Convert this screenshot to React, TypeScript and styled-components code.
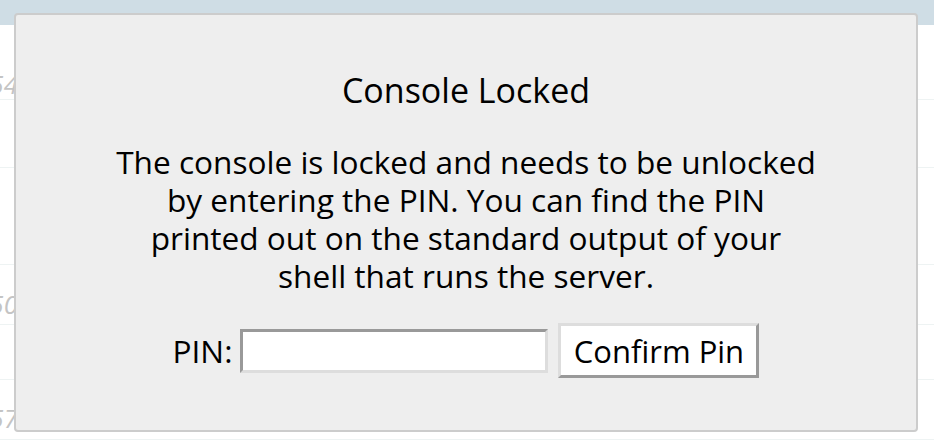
import React from "react";
import styled, { createGlobalStyle } from "styled-components";

const Global = createGlobalStyle`
  html, body { margin: 0; padding: 0; background: #ffffff; }
  body { font-family: "Open Sans", "Noto Sans", sans-serif; color: #000; }
  #root { position: relative; width: 934px; height: 448px; overflow: hidden; }
`;

const Page = styled.div`
  display: flex;
  flex-direction: column;
  width: 934px;
  height: 448px;
  background: #ffffff;
`;

const HeaderBand = styled.div`
  height: 25px;
  flex: none;
  background: #cfdde5;
`;

const Row = styled.div<{ $h: number; $pad: number }>`
  flex: none;
  height: ${(p) => p.$h}px;
  box-sizing: border-box;
  padding-top: ${(p) => p.$pad}px;
  border-bottom: 1px solid #eef3f3;
  display: flex;
`;

const LineNo = styled.span`
  margin-left: -22px;
  width: 40px;
  text-align: right;
  font-style: italic;
  font-size: 26px;
  line-height: 22px;
  color: #c4c4c4;
`;

const Overlay = styled.div`
  position: absolute;
  inset: 0;
  display: flex;
  justify-content: flex-start;
  align-items: flex-start;
  padding: 13px 0 0 14px;
`;

const Dialog = styled.div`
  box-sizing: border-box;
  width: 904px;
  height: 419px;
  background: #eeeeee;
  border: 2px solid #cccccc;
  border-radius: 4px;
  padding: 20px 60px;
  display: flex;
  flex-direction: column;
  align-items: center;
  text-align: center;
`;

const Title = styled.h3`
  margin: 36px 0 0 0;
  font-weight: normal;
  font-size: 34px;
  line-height: 38px;
`;

const Message = styled.p`
  margin: 34px 0 0 0;
  font-size: 31.6px;
  line-height: 38px;
  white-space: nowrap;
`;

const PinRow = styled.form`
  margin: 28px 0 0 0;
  display: flex;
  align-items: center;
  font-size: 31.6px;
`;

const PinLabel = styled.label`
  margin-right: 8px;
`;

const PinInput = styled.input`
  box-sizing: border-box;
  width: 308px;
  height: 44px;
  background: #ffffff;
  border-style: solid;
  border-width: 3px;
  border-color: #999999 #dddddd #dddddd #999999;
  outline: none;
  margin: 0 10px 0 0;
  padding: 0 6px;
  font-family: inherit;
  font-size: 28px;
`;

const ConfirmButton = styled.button`
  box-sizing: border-box;
  width: 201px;
  height: 55px;
  background: #ffffff;
  border-style: solid;
  border-width: 3px;
  border-color: #dddddd #999999 #999999 #dddddd;
  padding: 0;
  font-family: inherit;
  font-size: 31px;
  color: #000;
`;

const rows = [
  { h: 75, pad: 48, n: "54" },
  { h: 68, pad: 0, n: "" },
  { h: 97, pad: 0, n: "" },
  { h: 60, pad: 28, n: "50" },
  { h: 55, pad: 0, n: "" },
  { h: 60, pad: 27, n: "57" },
];

export default function App() {
  return (
    <>
      <Global />
      <Page>
        <HeaderBand />
        {rows.map((r, i) => (
          <Row key={i} $h={r.h} $pad={r.pad}>
            {r.n && <LineNo>{r.n}</LineNo>}
          </Row>
        ))}
      </Page>
      <Overlay>
        <Dialog>
          <Title>Console Locked</Title>
          <Message>
            The console is locked and needs to be unlocked
            <br />
            by entering the PIN. You can find the PIN
            <br />
            printed out on the standard output of your
            <br />
            shell that runs the server.
          </Message>
          <PinRow onSubmit={(e) => e.preventDefault()}>
            <PinLabel>PIN:</PinLabel>
            <PinInput type="text" name="pin" />
            <ConfirmButton type="submit">Confirm Pin</ConfirmButton>
          </PinRow>
        </Dialog>
      </Overlay>
    </>
  );
}
